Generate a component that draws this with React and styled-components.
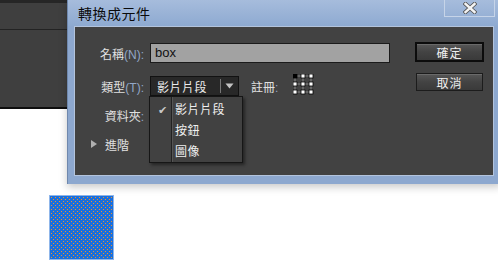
import React from 'react';
import styled, { createGlobalStyle } from 'styled-components';

const GlobalStyle = createGlobalStyle`
  html, body {
    margin: 0;
    padding: 0;
    background: #fff;
  }
  body {
    width: 498px;
    height: 263px;
    overflow: hidden;
    font-family: "Noto Sans CJK TC", "Liberation Sans", sans-serif;
  }
`;

const Workspace = styled.div`
  position: relative;
  width: 498px;
  height: 263px;
  background: #fff;
`;

const AppPanel = styled.div`
  height: 104px;
  background: #3f3f3f;
  border-top: 3px solid #262626;
  border-bottom: 2px solid #0e0e0e;
`;

const PanelHeader = styled.div`
  height: 26px;
  border-bottom: 1px solid #232323;
`;

const Symbol = styled.svg`
  position: absolute;
  left: 50px;
  top: 196px;
  display: block;
  outline: 1px solid #8fb6ea;
`;

const Dialog = styled.div`
  position: absolute;
  left: 67px;
  top: 0;
  width: 434px;
  height: 184px;
  background: #8da8cf;
  border-left: 1px solid #6f88ad;
  box-sizing: border-box;
  box-shadow: 0 3px 8px rgba(0, 0, 0, 0.22);
`;

const TitleBar = styled.div`
  position: relative;
  height: 26px;
  display: flex;
  align-items: center;
  padding-left: 10px;
  background: linear-gradient(180deg, #a6bcdc 0%, #8eaad1 100%);
`;

const Title = styled.span`
  font-size: 14px;
  color: #0a0a0a;
  letter-spacing: 0.5px;
`;

const CloseButton = styled.div`
  position: absolute;
  left: 376px;
  top: -1px;
  width: 51px;
  height: 18px;
  border: 1px solid #c6d4e8;
  box-sizing: border-box;
  display: flex;
  align-items: center;
  justify-content: center;
  svg { display: block; }
`;

const Content = styled.div`
  margin-left: 6px;
  width: 420px;
  height: 150px;
  background: #424242;
  border: 1px solid #b3c4dd;
  box-sizing: border-box;
  display: flex;
  padding: 15px 9px 0 0;
`;

const Form = styled.div`
  flex: 1;
  display: flex;
  flex-direction: column;
`;

const Row = styled.div`
  display: flex;
  align-items: center;
  height: 20px;
  margin-top: ${p => p.$gap || 0}px;
`;

const Label = styled.div`
  width: 69px;
  text-align: right;
  font-size: 12px;
  color: #e0e0e0;
  white-space: nowrap;
  margin-right: 6px;
`;

const Key = styled.span`
  color: #92a7c7;
  font-family: "Liberation Sans", sans-serif;
`;

const NameInput = styled.div`
  width: 240px;
  height: 20px;
  box-sizing: border-box;
  background: #a2a2a2;
  border: 1px solid #1b1b1b;
  font-family: "Liberation Sans", sans-serif;
  font-size: 13px;
  color: #111;
  padding-left: 4px;
  line-height: 17px;
`;

const SelectWrap = styled.div`
  position: relative;
`;

const Select = styled.div`
  width: 89px;
  height: 20px;
  box-sizing: border-box;
  background: #282828;
  border: 1px solid #121212;
  display: flex;
  align-items: center;
  font-size: 12px;
  color: #ececec;
`;

const SelectText = styled.span`
  flex: 1;
  padding-left: 6px;
  letter-spacing: 0.5px;
`;

const SelectArrow = styled.span`
  width: 17px;
  height: 14px;
  border-left: 1px solid #777;
  display: flex;
  align-items: center;
  justify-content: center;
  svg { display: block; }
`;

const Menu = styled.div`
  position: absolute;
  left: -1px;
  top: 20px;
  width: 94px;
  box-sizing: border-box;
  background: #414141;
  border: 1px solid #161616;
  box-shadow: 2px 2px 3px rgba(0, 0, 0, 0.45);
  padding: 1px 0;
  z-index: 2;
  &::before {
    content: '';
    position: absolute;
    left: 21px;
    top: 0;
    bottom: 0;
    border-left: 1px solid #222;
    border-right: 1px solid #555;
  }
`;

const MenuItem = styled.div`
  display: flex;
  align-items: center;
  height: 21px;
  font-size: 12px;
  color: #efefef;
  letter-spacing: 0.5px;
`;

const Check = styled.span`
  width: 25px;
  display: flex;
  justify-content: center;
  color: #c8c8c8;
  font-size: 11px;
`;

const RegLabel = styled.div`
  margin-left: 12px;
  font-size: 12px;
  color: #e0e0e0;
`;

const RegIcon = styled.svg`
  display: block;
  margin-left: 15px;
  margin-top: -2px;
`;

const Advanced = styled.div`
  display: flex;
  align-items: center;
  padding-left: 16px;
  font-size: 12px;
  color: #e0e0e0;
  gap: 8px;
`;

const Triangle = styled.span`
  width: 0;
  height: 0;
  border-top: 4px solid transparent;
  border-bottom: 4px solid transparent;
  border-left: 6px solid #b0b0b0;
`;

const Buttons = styled.div`
  width: 69px;
  display: flex;
  flex-direction: column;
  align-items: center;
  gap: 11px;
`;

const Button = styled.div`
  width: ${p => (p.$primary ? 69 : 67)}px;
  height: ${p => (p.$primary ? 20 : 18)}px;
  box-sizing: border-box;
  border: ${p => (p.$primary ? '2px solid #0c0c0c' : '1px solid #1c1c1c')};
  background: linear-gradient(180deg, #575757 0%, #434343 50%, #3a3a3a 100%);
  box-shadow: inset 0 1px 0 #6a6a6a;
  display: flex;
  align-items: center;
  justify-content: center;
  font-size: 12px;
  color: #f0f0f0;
  letter-spacing: 1px;
`;

const RegistrationIcon = () => {
  const pts = [2, 10, 18];
  const squares = [];
  pts.forEach((y, r) =>
    pts.forEach((x, c) => {
      squares.push(
        <rect
          key={`${r}-${c}`}
          x={x - 2}
          y={y - 2}
          width={4}
          height={4}
          fill={r === 0 && c === 0 ? '#000' : '#fff'}
          stroke="#000"
          strokeWidth={0.8}
        />
      );
    })
  );
  return (
    <RegIcon width="22" height="22" viewBox="0 0 22 22">
      <path d="M2 2H18M2 10H18M2 18H18M2 2V18M10 2V18M18 2V18" stroke="#8a8a8a" strokeWidth="1" />
      {squares}
    </RegIcon>
  );
};

const DottedSymbol = () => (
  <Symbol width="63" height="63" viewBox="0 0 63 63" shapeRendering="crispEdges">
    <defs>
      <pattern id="dots" width="4" height="4" patternUnits="userSpaceOnUse">
        <rect width="4" height="4" fill="#1a6fdc" />
        <rect x="1" y="1" width="1" height="1" fill="#f0902a" />
        <rect x="3" y="3" width="1" height="1" fill="#f0902a" />
      </pattern>
    </defs>
    <rect width="63" height="63" fill="url(#dots)" />
  </Symbol>
);

export default function App() {
  return (
    <Workspace>
      <GlobalStyle />
      <AppPanel>
        <PanelHeader />
      </AppPanel>
      <DottedSymbol />
      <Dialog>
        <TitleBar>
          <Title>轉換成元件</Title>
          <CloseButton>
            <svg width="14" height="12" viewBox="0 0 14 12">
              <path
                d="M2.5 2L11.5 10M11.5 2L2.5 10"
                stroke="#555"
                strokeWidth="4.2"
                strokeLinecap="square"
              />
              <path
                d="M2.5 2L11.5 10M11.5 2L2.5 10"
                stroke="#f4f4f4"
                strokeWidth="2.4"
                strokeLinecap="square"
              />
            </svg>
          </CloseButton>
        </TitleBar>
        <Content>
          <Form>
            <Row $gap={1}>
              <Label>名稱<Key>(N):</Key></Label>
              <NameInput>box</NameInput>
            </Row>
            <Row $gap={13}>
              <Label>類型<Key>(T):</Key></Label>
              <SelectWrap>
                <Select>
                  <SelectText>影片片段</SelectText>
                  <SelectArrow>
                    <svg width="9" height="6" viewBox="0 0 9 6">
                      <path d="M0.5 0.5H8.5L4.5 5.5Z" fill="#c4c4c4" />
                    </svg>
                  </SelectArrow>
                </Select>
                <Menu>
                  <MenuItem><Check>✔</Check>影片片段</MenuItem>
                  <MenuItem><Check />按鈕</MenuItem>
                  <MenuItem><Check />圖像</MenuItem>
                </Menu>
              </SelectWrap>
              <RegLabel>註冊<Key>:</Key></RegLabel>
              <RegistrationIcon />
            </Row>
            <Row $gap={9}>
              <Label>資料夾<Key>:</Key></Label>
            </Row>
            <Row $gap={9}>
              <Advanced><Triangle />進階</Advanced>
            </Row>
          </Form>
          <Buttons>
            <Button $primary>確定</Button>
            <Button>取消</Button>
          </Buttons>
        </Content>
      </Dialog>
    </Workspace>
  );
}
